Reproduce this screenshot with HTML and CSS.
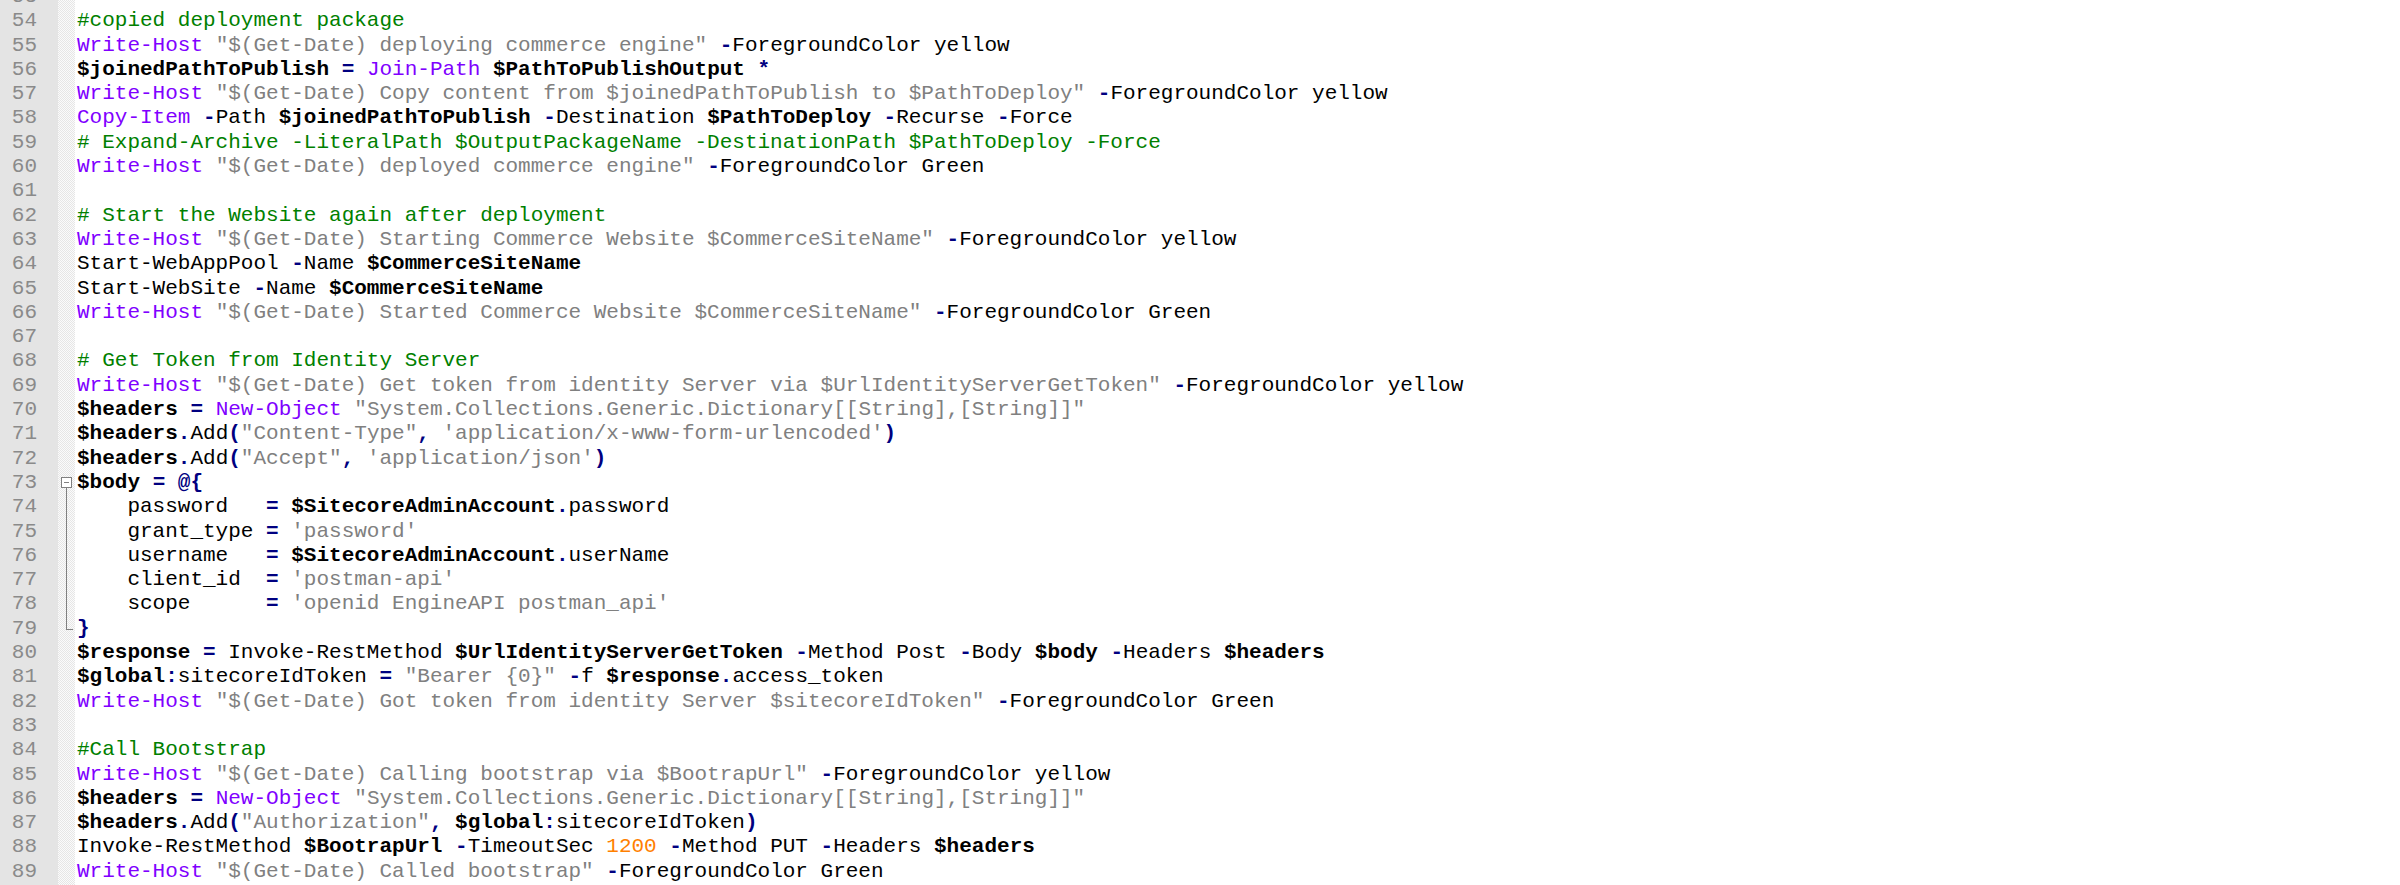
FILE: index.html
```html
<!DOCTYPE html>
<html lang="en">
<head>
<meta charset="utf-8">
<title>deploy.ps1</title>
<link rel="stylesheet" href="styles.css">
</head>
<body>
<div class="editor">
  <div class="gutter">
    <div class="ln">53</div><div class="ln">54</div><div class="ln">55</div><div class="ln">56</div><div class="ln">57</div><div class="ln">58</div><div class="ln">59</div><div class="ln">60</div><div class="ln">61</div><div class="ln">62</div><div class="ln">63</div><div class="ln">64</div><div class="ln">65</div><div class="ln">66</div><div class="ln">67</div><div class="ln">68</div><div class="ln">69</div><div class="ln">70</div><div class="ln">71</div><div class="ln">72</div><div class="ln">73</div><div class="ln">74</div><div class="ln">75</div><div class="ln">76</div><div class="ln">77</div><div class="ln">78</div><div class="ln">79</div><div class="ln">80</div><div class="ln">81</div><div class="ln">82</div><div class="ln">83</div><div class="ln">84</div><div class="ln">85</div><div class="ln">86</div><div class="ln">87</div><div class="ln">88</div><div class="ln">89</div>
  </div>
  <div class="fold">
    <div class="fr"></div><div class="fr"></div><div class="fr"></div><div class="fr"></div><div class="fr"></div><div class="fr"></div><div class="fr"></div><div class="fr"></div><div class="fr"></div><div class="fr"></div><div class="fr"></div><div class="fr"></div><div class="fr"></div><div class="fr"></div><div class="fr"></div><div class="fr"></div><div class="fr"></div><div class="fr"></div><div class="fr"></div><div class="fr"></div>
    <div class="fr open"><span class="box"></span></div>
    <div class="fr mid"></div><div class="fr mid"></div><div class="fr mid"></div><div class="fr mid"></div><div class="fr mid"></div>
    <div class="fr end"></div>
  </div>
  <div class="code">
<div class="l"> </div>
<div class="l"><span class="c">#copied deployment package</span></div>
<div class="l"><span class="k">Write-Host</span> <span class="s">"$(Get-Date) deploying commerce engine"</span> <span class="o">-</span>ForegroundColor yellow</div>
<div class="l"><span class="v">$joinedPathToPublish</span> <span class="o">=</span> <span class="k">Join-Path</span> <span class="v">$PathToPublishOutput</span> <span class="o">*</span></div>
<div class="l"><span class="k">Write-Host</span> <span class="s">"$(Get-Date) Copy content from $joinedPathToPublish to $PathToDeploy"</span> <span class="o">-</span>ForegroundColor yellow</div>
<div class="l"><span class="k">Copy-Item</span> <span class="o">-</span>Path <span class="v">$joinedPathToPublish</span> <span class="o">-</span>Destination <span class="v">$PathToDeploy</span> <span class="o">-</span>Recurse <span class="o">-</span>Force</div>
<div class="l"><span class="c"># Expand-Archive -LiteralPath $OutputPackageName -DestinationPath $PathToDeploy -Force</span></div>
<div class="l"><span class="k">Write-Host</span> <span class="s">"$(Get-Date) deployed commerce engine"</span> <span class="o">-</span>ForegroundColor Green</div>
<div class="l"> </div>
<div class="l"><span class="c"># Start the Website again after deployment</span></div>
<div class="l"><span class="k">Write-Host</span> <span class="s">"$(Get-Date) Starting Commerce Website $CommerceSiteName"</span> <span class="o">-</span>ForegroundColor yellow</div>
<div class="l">Start-WebAppPool <span class="o">-</span>Name <span class="v">$CommerceSiteName</span></div>
<div class="l">Start-WebSite <span class="o">-</span>Name <span class="v">$CommerceSiteName</span></div>
<div class="l"><span class="k">Write-Host</span> <span class="s">"$(Get-Date) Started Commerce Website $CommerceSiteName"</span> <span class="o">-</span>ForegroundColor Green</div>
<div class="l"> </div>
<div class="l"><span class="c"># Get Token from Identity Server</span></div>
<div class="l"><span class="k">Write-Host</span> <span class="s">"$(Get-Date) Get token from identity Server via $UrlIdentityServerGetToken"</span> <span class="o">-</span>ForegroundColor yellow</div>
<div class="l"><span class="v">$headers</span> <span class="o">=</span> <span class="k">New-Object</span> <span class="s">"System.Collections.Generic.Dictionary[[String],[String]]"</span></div>
<div class="l"><span class="v">$headers</span><span class="o">.</span>Add<span class="o">(</span><span class="s">"Content-Type"</span><span class="o">,</span> <span class="s">'application/x-www-form-urlencoded'</span><span class="o">)</span></div>
<div class="l"><span class="v">$headers</span><span class="o">.</span>Add<span class="o">(</span><span class="s">"Accept"</span><span class="o">,</span> <span class="s">'application/json'</span><span class="o">)</span></div>
<div class="l"><span class="v">$body</span> <span class="o">=</span> <span class="o">@{</span></div>
<div class="l">    password   <span class="o">=</span> <span class="v">$SitecoreAdminAccount</span><span class="o">.</span>password</div>
<div class="l">    grant_type <span class="o">=</span> <span class="s">'password'</span></div>
<div class="l">    username   <span class="o">=</span> <span class="v">$SitecoreAdminAccount</span><span class="o">.</span>userName</div>
<div class="l">    client_id  <span class="o">=</span> <span class="s">'postman-api'</span></div>
<div class="l">    scope      <span class="o">=</span> <span class="s">'openid EngineAPI postman_api'</span></div>
<div class="l"><span class="o">}</span></div>
<div class="l"><span class="v">$response</span> <span class="o">=</span> Invoke-RestMethod <span class="v">$UrlIdentityServerGetToken</span> <span class="o">-</span>Method Post <span class="o">-</span>Body <span class="v">$body</span> <span class="o">-</span>Headers <span class="v">$headers</span></div>
<div class="l"><span class="v">$global</span><span class="o">:</span>sitecoreIdToken <span class="o">=</span> <span class="s">"Bearer {0}"</span> <span class="o">-</span>f <span class="v">$response</span><span class="o">.</span>access_token</div>
<div class="l"><span class="k">Write-Host</span> <span class="s">"$(Get-Date) Got token from identity Server $sitecoreIdToken"</span> <span class="o">-</span>ForegroundColor Green</div>
<div class="l"> </div>
<div class="l"><span class="c">#Call Bootstrap</span></div>
<div class="l"><span class="k">Write-Host</span> <span class="s">"$(Get-Date) Calling bootstrap via $BootrapUrl"</span> <span class="o">-</span>ForegroundColor yellow</div>
<div class="l"><span class="v">$headers</span> <span class="o">=</span> <span class="k">New-Object</span> <span class="s">"System.Collections.Generic.Dictionary[[String],[String]]"</span></div>
<div class="l"><span class="v">$headers</span><span class="o">.</span>Add<span class="o">(</span><span class="s">"Authorization"</span><span class="o">,</span> <span class="v">$global</span><span class="o">:</span>sitecoreIdToken<span class="o">)</span></div>
<div class="l">Invoke-RestMethod <span class="v">$BootrapUrl</span> <span class="o">-</span>TimeoutSec <span class="n">1200</span> <span class="o">-</span>Method PUT <span class="o">-</span>Headers <span class="v">$headers</span></div>
<div class="l"><span class="k">Write-Host</span> <span class="s">"$(Get-Date) Called bootstrap"</span> <span class="o">-</span>ForegroundColor Green</div>
  </div>
</div>
</body>
</html>
```
FILE: styles.css
```css
html, body {
  margin: 0;
  padding: 0;
  background: #ffffff;
  overflow: hidden;
}

.editor {
  display: flex;
  align-items: stretch;
  margin-top: -15px;
  min-height: calc(100vh + 15px);
  font-family: "Liberation Mono", "Courier New", monospace;
  font-size: 21px;
  line-height: 24.3px;
}

.gutter {
  flex: 0 0 58px;
  box-sizing: border-box;
  padding-right: 21px;
  background: #e4e4e4;
  color: #8a8a8a;
  text-align: right;
}

.ln {
  height: 24.3px;
}

.fold {
  flex: 0 0 17px;
  background-color: #f1f1f1;
  background-image: repeating-conic-gradient(#e6e6e6 0 25%, #fbfbfb 0 50%);
  background-size: 2px 2px;
}

.fr {
  position: relative;
  height: 24.3px;
}

.fr.open .box {
  position: absolute;
  left: 3px;
  top: 6px;
  width: 11px;
  height: 11px;
  box-sizing: border-box;
  border: 1px solid #808080;
  background: #ffffff;
}

.fr.open .box::after {
  content: "";
  position: absolute;
  left: 2px;
  top: 4px;
  width: 5px;
  height: 1px;
  background: #808080;
}

.fr.open::after {
  content: "";
  position: absolute;
  left: 8px;
  top: 17px;
  bottom: 0;
  width: 1px;
  background: #808080;
}

.fr.mid::after {
  content: "";
  position: absolute;
  left: 8px;
  top: 0;
  bottom: 0;
  width: 1px;
  background: #808080;
}

.fr.end::before {
  content: "";
  position: absolute;
  left: 8px;
  top: 0;
  height: 13px;
  width: 1px;
  background: #808080;
}

.fr.end::after {
  content: "";
  position: absolute;
  left: 8px;
  top: 12px;
  width: 7px;
  height: 1px;
  background: #808080;
}

.code {
  flex: 1 1 auto;
  padding-left: 2px;
  color: #000000;
}

.l {
  height: 24.3px;
  white-space: pre;
}

.c { color: #008000; }
.k { color: #8000ff; }
.s { color: #808080; }
.v { color: #000000; font-weight: bold; }
.o { color: #000080; font-weight: bold; }
.n { color: #ff8000; }
```
